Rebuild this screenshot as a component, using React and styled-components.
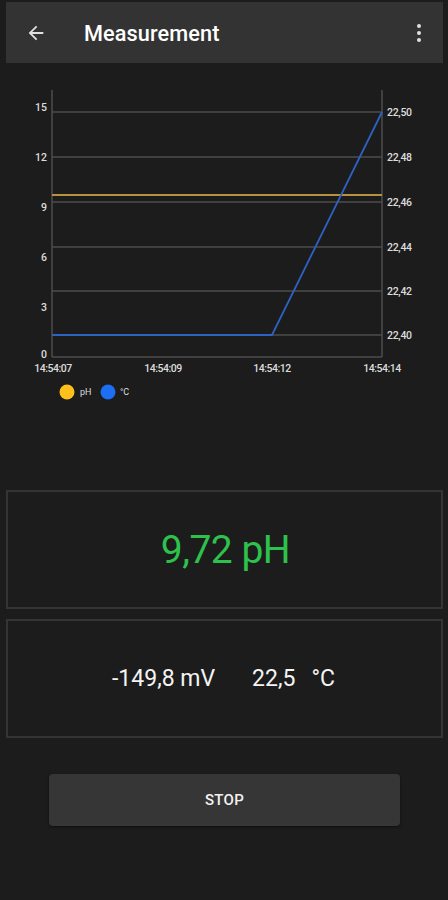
import React from "react";
import styled, { createGlobalStyle } from "styled-components";

const Global = createGlobalStyle`
  html, body { margin: 0; padding: 0; background: #1c1c1c; }
  body { font-family: Roboto, "Noto Sans", sans-serif; color: #fff; }
`;

const Page = styled.div`
  width: 448px;
  min-height: 900px;
  background: #1c1c1c;
  display: flex;
  flex-direction: column;
`;

const Toolbar = styled.header`
  margin: 2px 5px 0 6px;
  height: 61px;
  background: #333333;
  display: flex;
  align-items: center;
  padding: 1px 12px 0 18px;
  box-sizing: border-box;
`;

const IconButton = styled.div`
  width: 24px;
  height: 24px;
  display: flex;
  align-items: center;
  justify-content: center;
  color: #e8e8e8;
`;

const Title = styled.h1`
  margin: 0 0 0 36px;
  flex: 1;
  font-size: 21.7px;
  font-weight: 500;
  color: #fff;
  letter-spacing: 0.1px;
`;

const ChartWrap = styled.section`
  height: 348px;
  display: block;
`;

const Card = styled.div`
  margin: ${(p) => p.$mt}px 5px 0 6px;
  height: 119px;
  box-sizing: border-box;
  border: 2px solid #343434;
  display: flex;
  align-items: center;
  justify-content: center;
`;

const BigValue = styled.span`
  font-size: 39px;
  color: #2ec24d;
  letter-spacing: -0.5px;
  margin-left: 2px;
`;

const Value = styled.span`
  font-size: 23px;
  color: #f4f4f4;
  margin-left: ${(p) => p.$ml || 0}px;
  white-space: pre;
`;

const ButtonRow = styled.div`
  display: flex;
  justify-content: flex-start;
  padding: 36px 0 0 49px;
`;

const StopButton = styled.button`
  width: 351px;
  height: 52px;
  border: none;
  border-radius: 4px;
  background: #363636;
  color: #f2f2f2;
  font-family: Roboto, sans-serif;
  font-weight: 500;
  font-size: 15px;
  letter-spacing: 0.3px;
  box-shadow: 0 1px 3px rgba(0,0,0,0.5);
`;

const leftLabels = [
  ["15", 107], ["12", 157], ["9", 207], ["6", 257], ["3", 307], ["0", 354],
];
const rightLabels = [
  ["22,50", 112], ["22,48", 157], ["22,46", 202], ["22,44", 247], ["22,42", 291], ["22,40", 335],
];
const xLabels = [["14:54:07", 53], ["14:54:09", 163], ["14:54:12", 272], ["14:54:14", 382]];

function Chart() {
  return (
    <svg width="448" height="348" viewBox="0 63 448 348" style={{ display: "block" }}>
      {rightLabels.map(([t, y]) => (
        <line key={t} x1="52" x2="382" y1={y} y2={y} stroke="#4d4d4d" strokeWidth="1.5" />
      ))}
      <line x1="52" x2="52" y1="90" y2="357" stroke="#4d4d4d" strokeWidth="1.5" />
      <line x1="382" x2="382" y1="90" y2="357" stroke="#4d4d4d" strokeWidth="1.5" />
      <line x1="52" x2="382" y1="357" y2="357" stroke="#4d4d4d" strokeWidth="1.5" />
      <line x1="52" x2="382" y1="195" y2="195" stroke="#b4923e" strokeWidth="2" />
      <polyline points="52,335 272,335 382,112" fill="none" stroke="#2d62c4" strokeWidth="1.8" />
      {leftLabels.map(([t, y]) => (
        <text key={t} x="47" y={y + 3.5} textAnchor="end" fontSize="10.5" fontWeight="500" fill="#dcdcdc" fontFamily="Roboto, sans-serif">{t}</text>
      ))}
      {rightLabels.map(([t, y]) => (
        <text key={t} x="387" y={y + 3.5} fontSize="10.5" fontWeight="500" fill="#dcdcdc" fontFamily="Roboto, sans-serif" letterSpacing="-0.3">{t}</text>
      ))}
      {xLabels.map(([t, x]) => (
        <text key={t} x={x} y="372" textAnchor="middle" fontSize="10.5" fontWeight="500" fill="#dcdcdc" fontFamily="Roboto, sans-serif" letterSpacing="-0.5">{t}</text>
      ))}
      <circle cx="67" cy="392" r="7.5" fill="#ffc01e" />
      <text x="80" y="395" fontSize="9" fill="#dcdcdc" fontFamily="Roboto, sans-serif">pH</text>
      <circle cx="108" cy="392" r="7.5" fill="#1c6ef2" />
      <text x="120" y="395" fontSize="9" fill="#dcdcdc" fontFamily="Roboto, sans-serif">°C</text>
    </svg>
  );
}

export default function App() {
  return (
    <Page>
      <Global />
      <Toolbar>
        <IconButton>
          <svg width="22" height="22" viewBox="0 0 24 24">
            <path d="M20 11H7.83l5.59-5.59L12 4l-8 8 8 8 1.41-1.41L7.83 13H20v-2z" fill="#e0e0e0" />
          </svg>
        </IconButton>
        <Title>Measurement</Title>
        <IconButton>
          <svg width="24" height="24" viewBox="0 0 24 24">
            <circle cx="12" cy="5" r="2" fill="#e0e0e0" />
            <circle cx="12" cy="12" r="2" fill="#e0e0e0" />
            <circle cx="12" cy="19" r="2" fill="#e0e0e0" />
          </svg>
        </IconButton>
      </Toolbar>
      <ChartWrap>
        <Chart />
      </ChartWrap>
      <Card $mt={79}>
        <BigValue>9,72 pH</BigValue>
      </Card>
      <Card $mt={10}>
        <Value $ml={-2}>-149,8 mV</Value>
        <Value $ml={37}>22,5</Value>
        <Value $ml={16}>°C</Value>
      </Card>
      <ButtonRow>
        <StopButton>STOP</StopButton>
      </ButtonRow>
    </Page>
  );
}
